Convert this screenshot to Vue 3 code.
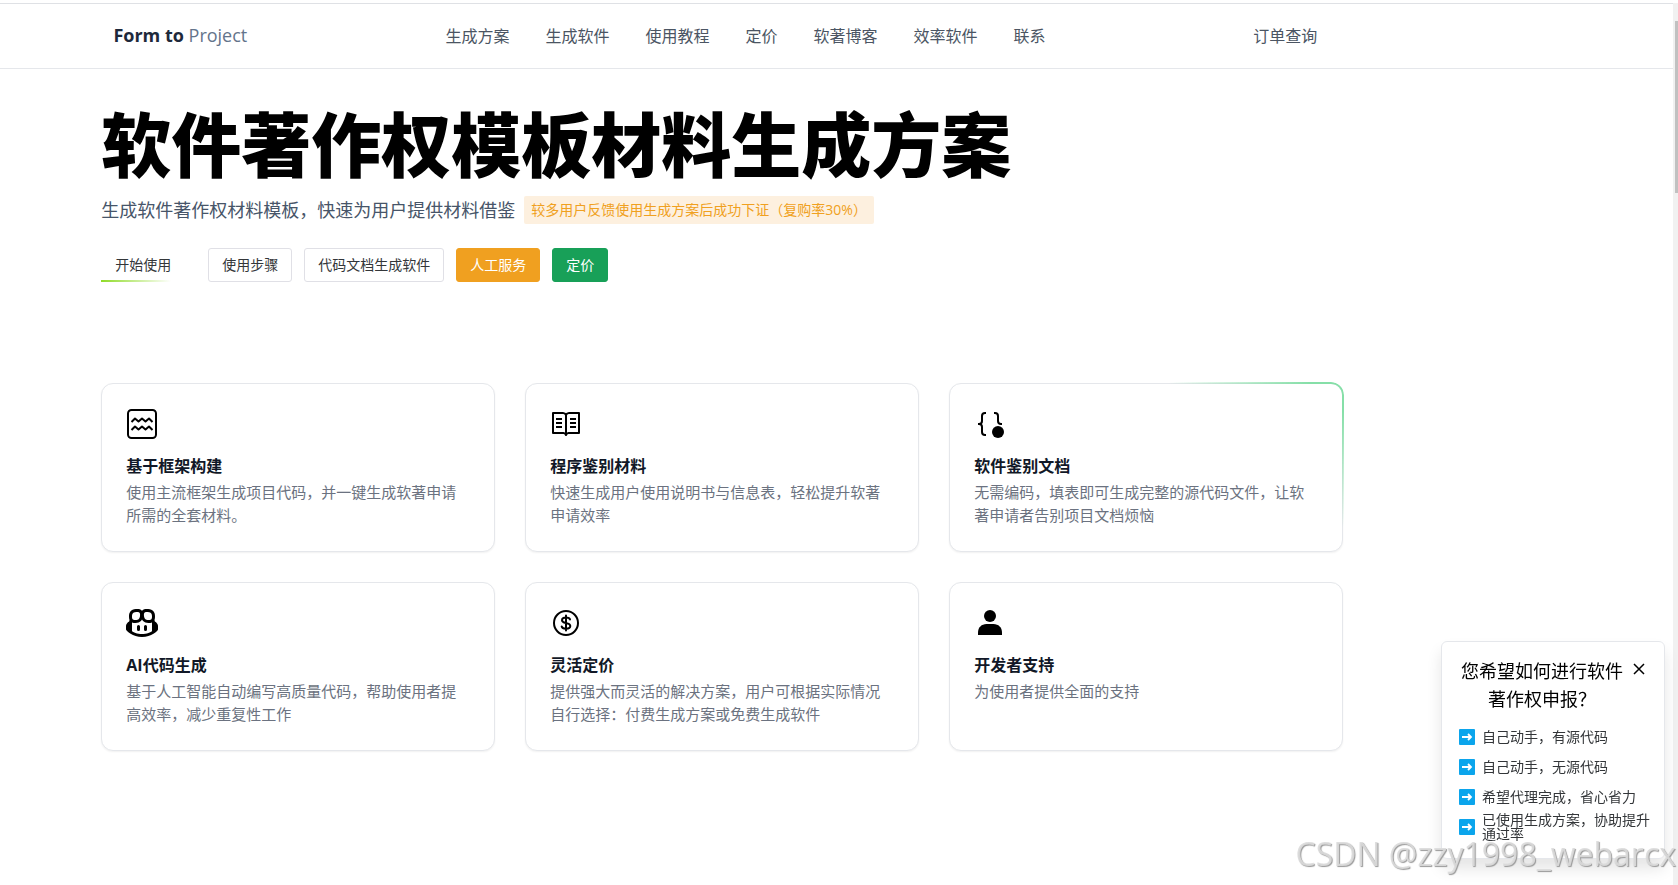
<script setup>
import { ref } from 'vue'

const navItems = ['生成方案', '生成软件', '使用教程', '定价', '软著博客', '效率软件', '联系']

const features = [
  { icon: 'frame', title: '基于框架构建', text: '使用主流框架生成项目代码，并一键生成软著申请所需的全套材料。' },
  { icon: 'book', title: '程序鉴别材料', text: '快速生成用户使用说明书与信息表，轻松提升软著申请效率' },
  { icon: 'braces', title: '软件鉴别文档', text: '无需编码，填表即可生成完整的源代码文件，让软著申请者告别项目文档烦恼', glow: true },
  { icon: 'copilot', title: 'AI代码生成', text: '基于人工智能自动编写高质量代码，帮助使用者提高效率，减少重复性工作' },
  { icon: 'dollar', title: '灵活定价', text: '提供强大而灵活的解决方案，用户可根据实际情况自行选择：付费生成方案或免费生成软件' },
  { icon: 'user', title: '开发者支持', text: '为使用者提供全面的支持' }
]

const choices = ['自己动手，有源代码', '自己动手，无源代码', '希望代理完成，省心省力', '已使用生成方案，协助提升通过率']

const showPanel = ref(true)
</script>

<template>
  <div class="page">
    <div class="content">
      <header class="topbar">
        <div class="container topbar-inner">
          <a class="logo" href="#"><strong>Form to</strong> Project</a>
          <nav class="nav">
            <a v-for="item in navItems" :key="item" href="#">{{ item }}</a>
          </nav>
          <a class="orders" href="#">订单查询</a>
        </div>
      </header>

      <main class="container">
        <section class="hero">
          <h1>软件著作权模板材料生成方案</h1>
          <div class="lead">
            <p>生成软件著作权材料模板，快速为用户提供材料借鉴</p>
            <span class="tag">较多用户反馈使用生成方案后成功下证（复购率30%）</span>
          </div>
          <div class="actions">
            <button class="btn start" type="button">开始使用</button>
            <button class="btn" type="button">使用步骤</button>
            <button class="btn" type="button">代码文档生成软件</button>
            <button class="btn warning" type="button">人工服务</button>
            <button class="btn success" type="button">定价</button>
          </div>
        </section>

        <section class="grid">
          <article v-for="f in features" :key="f.title" class="card" :class="{ glow: f.glow }">
            <svg v-if="f.icon === 'frame'" class="icon" viewBox="0 0 32 32" fill="none" stroke="currentColor" stroke-width="2" stroke-linejoin="round" aria-hidden="true">
              <rect x="2" y="2" width="28" height="28" rx="3.5" />
              <path d="M5.5 14 9 10.500l3.500 3L16 10.500l3.500 3L23 10.500l3.500 3.500M5.500 22 9 18.500l3.500 3L16 18.500l3.500 3L23 18.500l3.500 3.500" />
            </svg>
            <svg v-else-if="f.icon === 'book'" class="icon" viewBox="0 0 32 32" fill="none" stroke="currentColor" stroke-width="2" stroke-linejoin="round" aria-hidden="true">
              <path d="M16 7c-.6-1.200-1.600-2-3-2H3v20h10.500c1.300 0 2 .8 2.500 2 .5-1.200 1.200-2 2.500-2H29V5H19c-1.400 0-2.400.8-3 2zM16 7v20M6 11h6M6 15h6M6 19h6M20 11h6M20 15h6M20 19h6" />
            </svg>
            <svg v-else-if="f.icon === 'braces'" class="icon" viewBox="0 0 32 32" aria-hidden="true">
              <path fill="none" stroke="currentColor" stroke-width="2" d="M12 5h-1a3 3 0 0 0-3 3v5a3 3 0 0 1-3 3H4h1a3 3 0 0 1 3 3v5a3 3 0 0 0 3 3h1M20 5h1a3 3 0 0 1 3 3v5a3 3 0 0 0 3 3h1" />
              <circle cx="24" cy="24" r="6" fill="currentColor" />
            </svg>
            <svg v-else-if="f.icon === 'copilot'" class="icon" viewBox="0 0 16 16" fill="currentColor" aria-hidden="true">
              <path d="M7.998 15.035c-4.562 0-7.873-2.914-7.998-3.749V9.338c.085-.628.677-1.686 1.588-2.065.013-.07.024-.143.036-.218.029-.183.06-.384.126-.612-.201-.508-.254-1.084-.254-1.656 0-.87.128-1.769.693-2.484.579-.733 1.494-1.124 2.724-1.261 1.206-.134 2.262.034 2.944.765.05.053.096.108.139.165.044-.057.094-.112.143-.165.682-.731 1.738-.899 2.944-.765 1.230.137 2.145.528 2.724 1.261.566.715.693 1.614.693 2.484 0 .572-.053 1.148-.254 1.656.066.228.098.429.126.612.012.076.024.148.037.218.924.385 1.522 1.471 1.591 2.095v1.872c0 .766-3.351 3.795-8.002 3.795Zm0-1.485c2.280 0 4.584-1.110 5.002-1.433V7.862l-.023-.116c-.49.21-1.075.291-1.727.291-1.146 0-2.059-.327-2.710-.991A3.222 3.222 0 0 1 8 6.303a3.240 3.240 0 0 1-.544.743c-.65.664-1.563.991-2.710.991-.652 0-1.236-.081-1.727-.291l-.023.116v4.255c.419.323 2.722 1.433 5.002 1.433ZM6.762 2.830c-.193-.206-.637-.413-1.682-.297-1.019.113-1.479.404-1.713.7-.247.312-.369.789-.369 1.554 0 .793.129 1.171.308 1.371.162.181.519.379 1.442.379.853 0 1.339-.235 1.638-.54.315-.322.527-.827.617-1.553.117-.935-.037-1.395-.241-1.614Zm4.155-.297c-1.044-.116-1.488.091-1.681.297-.204.219-.359.679-.242 1.614.091.726.303 1.231.618 1.553.299.305.784.54 1.638.54.922 0 1.280-.198 1.442-.379.179-.2.308-.578.308-1.371 0-.765-.123-1.242-.37-1.554-.233-.296-.693-.587-1.713-.7Z" />
              <path d="M6.250 9.037a.75.75 0 0 1 .75.75v1.501a.75.75 0 0 1-1.500 0V9.787a.75.75 0 0 1 .75-.75Zm4.250.75v1.501a.75.75 0 0 1-1.500 0V9.787a.75.75 0 0 1 1.500 0Z" />
            </svg>
            <svg v-else-if="f.icon === 'dollar'" class="icon" viewBox="0 0 32 32" fill="none" stroke="currentColor" stroke-width="2" stroke-linecap="round" aria-hidden="true">
              <circle cx="16" cy="16" r="12" />
              <path d="M16 8.500v15M20 12.500c-.3-1.300-1.600-2-4-2-2.600 0-4 1-4 2.700 0 1.800 1.500 2.300 4 2.800s4.300 1.100 4.300 3c0 1.800-1.600 2.700-4.300 2.700-2.500 0-4-.8-4.300-2.200" />
            </svg>
            <svg v-else class="icon" viewBox="0 0 32 32" fill="currentColor" aria-hidden="true">
              <circle cx="16" cy="9" r="6" />
              <path d="M4 28v-2.500C4 20.500 7.500 17 12.500 17h7c5 0 8.500 3.500 8.500 8.500V28z" />
            </svg>
            <h2>{{ f.title }}</h2>
            <p>{{ f.text }}</p>
          </article>
        </section>
      </main>
    </div>

    <div class="scroll-track"><div class="scroll-thumb"></div></div>

    <aside v-if="showPanel" class="panel">
      <div class="panel-head">
        <h3>您希望如何进行软件著作权申报？</h3>
        <button class="close" type="button" aria-label="关闭" @click="showPanel = false">
          <svg viewBox="0 0 12 12" fill="none" stroke="currentColor" stroke-width="1.5" aria-hidden="true">
            <path d="M1 1l10 10M11 1 1 11" />
          </svg>
        </button>
      </div>
      <ul>
        <li v-for="c in choices" :key="c">
          <a href="#">
            <svg viewBox="0 0 16 16" aria-hidden="true">
              <rect width="16" height="16" rx="1" fill="#0ba5ec" />
              <path d="M3 8h9M9 5l3 3-3 3" fill="none" stroke="#fff" stroke-width="1.800" />
            </svg>
            <span>{{ c }}</span>
          </a>
        </li>
      </ul>
    </aside>

    <div class="watermark">CSDN @zzy1998_webarcx</div>
  </div>
</template>

<style>
body {
  margin: 0;
  background: #fff;
}
</style>

<style scoped>
.page {
  position: relative;
  display: flex;
  box-sizing: border-box;
  min-height: 100vh;
  padding-top: 3px;
  overflow: hidden;
  font-family: "Open Sans", "Noto Sans CJK SC", sans-serif;
  color: #000;
}
.page * {
  box-sizing: border-box;
}
.content {
  flex: 1;
  min-width: 0;
  padding-left: 1px;
  border-top: 1px solid #dfe1e5;
}
.container {
  max-width: 1242px;
  margin-left: 6%;
  margin-right: 24px;
}
a {
  color: inherit;
  text-decoration: none;
}
h1, h2, h3, p, ul {
  margin: 0;
  padding: 0;
}
.topbar {
  margin-left: -1px;
  border-bottom: 1px solid #e5e7eb;
}
.topbar-inner {
  display: flex;
  align-items: center;
  height: 64px;
  padding: 0 25px 2px 13px;
  font-size: 16px;
  color: #4b5563;
  white-space: nowrap;
}
.logo {
  flex: 0 0 332px;
  font-size: 18px;
  color: #64748b;
}
.logo strong {
  font-weight: 700;
  color: #1e293b;
}
.nav {
  display: flex;
  gap: 36px;
}
.orders {
  margin-left: auto;
}
.hero {
  padding-top: 39px;
}
h1 {
  font-size: 70px;
  line-height: 74px;
  font-weight: 900;
}
.lead {
  display: flex;
  align-items: center;
  gap: 9px;
  margin-top: 14px;
}
.lead p {
  font-size: 18px;
  line-height: 28px;
  color: #475569;
}
.tag {
  padding: 0 7px;
  font-size: 14px;
  line-height: 28px;
  white-space: nowrap;
  border-radius: 2px;
  background: #fdf0df;
  color: #f0a020;
}
.actions {
  display: flex;
  gap: 12px;
  margin-top: 24px;
}
.btn {
  height: 34px;
  padding: 0 13px 2px;
  border: 1px solid #e0e0e6;
  border-radius: 3px;
  background: #fff;
  font: inherit;
  font-size: 14px;
  color: #333639;
  white-space: nowrap;
}
.btn.start {
  margin-right: 11px;
  border-color: transparent;
  border-radius: 0;
  background: linear-gradient(90deg, #8fdb28, #8fdb2800) left bottom / 70px 2px no-repeat border-box;
}
.btn.warning {
  border-color: #f0a020;
  background: #f0a020;
  color: #fff;
}
.btn.success {
  border-color: #18a058;
  background: #18a058;
  color: #fff;
}
.grid {
  display: grid;
  grid-template-columns: repeat(3, 1fr);
  gap: 30px;
  margin-top: 101px;
}
.card {
  position: relative;
  padding: 24px;
  border: 1px solid #e5e7eb;
  border-radius: 12px;
  background: #fff;
  box-shadow: 0 1px 2px rgba(0, 0, 0, 0.06);
}
.card.glow::after {
  content: "";
  position: absolute;
  inset: -2px;
  padding: 2px;
  border-radius: 13px;
  background: radial-gradient(ellipse 175px 145px at 100% 0, #86dfa8 20%, #86dfa800 100%);
  mask: linear-gradient(#000 0 0) content-box exclude, linear-gradient(#000 0 0);
  pointer-events: none;
}
.icon {
  display: block;
  width: 32px;
  height: 32px;
}
.card h2 {
  margin-top: 14px;
  font-size: 16px;
  line-height: 24px;
  font-weight: 700;
  color: #111827;
}
.card p {
  margin-top: 3px;
  font-size: 15px;
  line-height: 23px;
  color: #6b7280;
}
.scroll-track {
  width: 5px;
  padding: 18px 0 0 2px;
  background: #f1f1f1;
}
.scroll-thumb {
  height: 172px;
  background: #c1c1c1;
}
.panel {
  position: fixed;
  right: 13px;
  bottom: 26px;
  width: 224px;
  padding: 15px 13px 16px 17px;
  border: 1px solid #e5e7eb;
  border-radius: 6px;
  background: #fff;
  box-shadow: 0 10px 15px rgba(0, 0, 0, 0.1);
}
.panel-head {
  display: flex;
  align-items: flex-start;
  justify-content: space-between;
}
.panel-head h3 {
  flex: 0 0 166px;
  font-size: 18px;
  line-height: 28px;
  font-weight: 400;
  text-align: center;
}
.close {
  display: flex;
  margin: 6px 6px 0 0;
  padding: 0;
  border: 0;
  background: none;
  color: #000;
}
.close svg {
  width: 12px;
  height: 12px;
}
.panel ul {
  margin-top: 9px;
  list-style: none;
}
.panel li a {
  display: flex;
  align-items: center;
  gap: 7px;
  height: 30px;
  font-size: 14px;
  line-height: 14px;
  color: #333639;
}
.panel li svg {
  flex: 0 0 16px;
  height: 16px;
}
.panel li span {
  flex: 0 0 169px;
}
.watermark {
  position: fixed;
  right: 2px;
  bottom: 9px;
  font-size: 32px;
  line-height: 44px;
  white-space: nowrap;
  color: rgba(220, 220, 220, 0.9);
  text-shadow: 1px 1px 1px #999;
  pointer-events: none;
}
</style>
